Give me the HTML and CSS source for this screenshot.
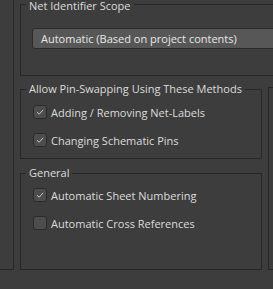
FILE: index.html
```html
<!DOCTYPE html>
<html>
<head>
<meta charset="utf-8">
<link rel="stylesheet" href="styles.css">
</head>
<body>
<div class="frame">
  <div class="side"></div>
  <div class="main">
    <fieldset class="group scope">
      <legend>Net Identifier Scope</legend>
      <div class="combo">Automatic (Based on project contents)</div>
    </fieldset>
    <div class="lower">
      <div class="col">
        <fieldset class="group swap">
          <legend>Allow Pin-Swapping Using These Methods</legend>
          <div class="row"><span class="check on"><svg viewBox="0 0 14 14" width="14" height="14"><path d="M3.5 7.2 L6 9.6 L10.6 4.6" /></svg></span><span>Adding / Removing Net-Labels</span></div>
          <div class="row"><span class="check on"><svg viewBox="0 0 14 14" width="14" height="14"><path d="M3.5 7.2 L6 9.6 L10.6 4.6" /></svg></span><span>Changing Schematic Pins</span></div>
        </fieldset>
        <fieldset class="group general">
          <legend>General</legend>
          <div class="row"><span class="check on"><svg viewBox="0 0 14 14" width="14" height="14"><path d="M3.5 7.2 L6 9.6 L10.6 4.6" /></svg></span><span>Automatic Sheet Numbering</span></div>
          <div class="row"><span class="check"></span><span>Automatic Cross References</span></div>
        </fieldset>
      </div>
      <div class="rightpane"></div>
    </div>
  </div>
</div>
</body>
</html>
```
FILE: styles.css
```css
html, body {
  margin: 0;
  padding: 0;
  background: #3d3d3d;
}
body {
  font-family: "Open Sans", "Noto Sans", sans-serif;
  font-size: 11px;
  color: #dcdcdc;
}
.frame {
  display: flex;
  height: 289px;
  width: 273px;
  overflow: hidden;
}
.side {
  flex: none;
  width: 13px;
  height: 269px;
  border-right: 1px solid #272727;
  border-bottom: 1px solid #272727;
}
.main {
  flex: none;
  margin-left: 6px;
  display: flex;
  flex-direction: column;
}
.group {
  margin: 0;
  padding: 0 0 0 11px;
  border: 1px solid #272727;
  min-width: 0;
}
.group legend {
  margin-left: -6px;
  padding: 0 3px;
  line-height: 12px;
  height: 12px;
  color: #dcdcdc;
}
.scope {
  width: 320px;
  box-sizing: border-box;
  padding-top: 20px;
  padding-bottom: 26px;
}
.scope legend {
  height: 8px;
  line-height: 12px;
}
.combo {
  height: 19px;
  width: 300px;
  box-sizing: content-box;
  border: 1px solid #2b2b2b;
  border-radius: 3px;
  background: #575757;
  color: #e8e8e8;
  padding-left: 8px;
  line-height: 19px;
}
.lower {
  display: flex;
  gap: 6px;
  margin-top: 7px;
}
.col {
  width: 242px;
  display: flex;
  flex-direction: column;
  gap: 8px;
}
.swap {
  padding-top: 7px;
  padding-bottom: 8px;
}
.general {
  padding-top: 6px;
  padding-bottom: 36px;
}
.row {
  display: flex;
  align-items: center;
  height: 20px;
  gap: 4px;
  padding-left: 1px;
}
.row + .row {
  margin-top: 8px;
}
.check {
  flex: none;
  width: 12px;
  height: 12px;
  border: 1px solid #2a2a2a;
  border-radius: 3px;
  background: #4d4d4d;
  display: flex;
  align-items: center;
  justify-content: center;
}
.check svg {
  width: 12px;
  height: 12px;
}
.check svg path {
  fill: none;
  stroke: #cfcfcf;
  stroke-width: 1.1;
}
.rightpane {
  flex: none;
  width: 20px;
  margin-top: 4px;
  height: 181px;
  border-left: 1px solid #272727;
  border-top: 1px solid #272727;
  border-bottom: 1px solid #272727;
}
```
